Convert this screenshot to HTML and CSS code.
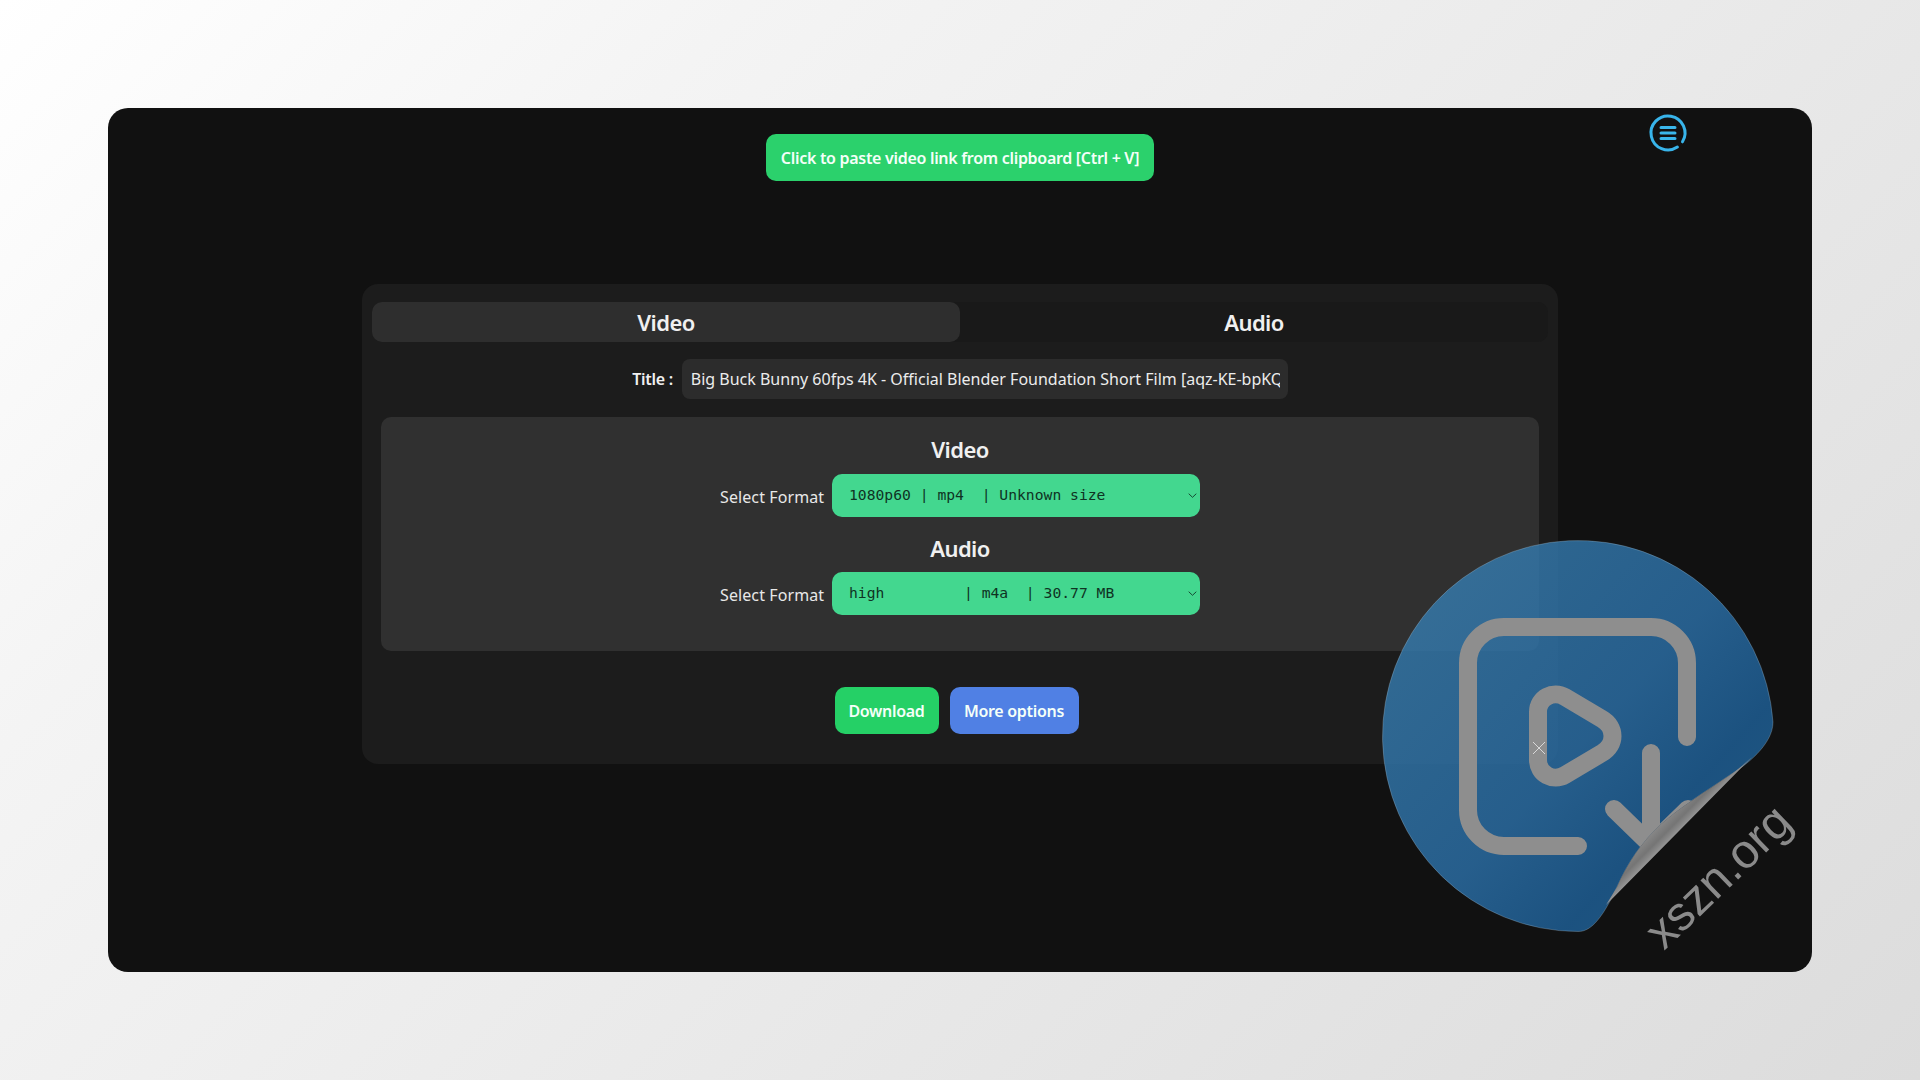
FILE: index.html
```html
<!DOCTYPE html>
<html lang="en">
<head>
<meta charset="utf-8">
<title>Video downloader</title>
<link rel="stylesheet" href="styles.css">
</head>
<body>
<main class="window">
  <button class="btn btn-paste" type="button">Click to paste video link from clipboard [Ctrl + V]</button>
  <svg class="menu-icon" viewBox="0 0 44 44" width="44" height="44" aria-hidden="true">
    <path class="menu-ring" d="M36.5 30.8A17 17 0 1 0 31.4 36.1"/>
    <path class="menu-bars" d="M15 16.5H29M15 22H29M15 27.5H29"/>
  </svg>
  <section class="card">
    <div class="tabs">
      <div class="tab tab-active">Video</div>
      <div class="tab">Audio</div>
    </div>
    <div class="title-row">
      <label class="title-label" for="title">Title :</label>
      <input class="title-input" id="title" type="text" readonly value="Big Buck Bunny 60fps 4K - Official Blender Foundation Short Film [aqz-KE-bpKQ]">
    </div>
    <div class="formats">
      <h2 class="format-heading">Video</h2>
      <div class="format-row">
        <span class="format-label">Select Format</span>
        <select class="format-select"><option>1080p60 | mp4&nbsp; | Unknown size</option></select>
      </div>
      <h2 class="format-heading format-heading-second">Audio</h2>
      <div class="format-row">
        <span class="format-label">Select Format</span>
        <select class="format-select"><option>high&nbsp;&nbsp;&nbsp;&nbsp;&nbsp;&nbsp;&nbsp;&nbsp; | m4a&nbsp; | 30.77 MB</option></select>
      </div>
    </div>
    <div class="actions">
      <button class="btn btn-download" type="button">Download</button>
      <button class="btn btn-more" type="button">More options</button>
    </div>
  </section>
</main>
<svg class="sticker" viewBox="1370 530 450 440" width="450" height="440" aria-hidden="true">
  <defs>
    <linearGradient id="blue" gradientUnits="userSpaceOnUse" x1="1430" y1="590" x2="1750" y2="880">
      <stop offset="0" stop-color="#367bad"/>
      <stop offset="0.5" stop-color="#2b6fa7"/>
      <stop offset="0.76" stop-color="#1e6098"/>
      <stop offset="0.86" stop-color="#206399"/>
      <stop offset="0.95" stop-color="#337cb3"/>
      <stop offset="1" stop-color="#337cb3"/>
    </linearGradient>
    <linearGradient id="curl" gradientUnits="userSpaceOnUse" x1="1645" y1="835" x2="1668" y2="858">
      <stop offset="0" stop-color="#8d8d8d"/>
      <stop offset="0.4" stop-color="#757575"/>
      <stop offset="0.75" stop-color="#a0a0a0"/>
      <stop offset="1" stop-color="#969696"/>
    </linearGradient>
    <clipPath id="peel">
      <path d="M1773 722A195.5 195.5 0 1 0 1578 931.5C1592 932 1604 915 1617 887C1628 862 1642 842 1660 825C1680 807 1705 792 1730 775C1745 766 1773 745 1773 722Z"/>
    </clipPath>
  </defs>
  <path class="sticker-body" d="M1773 722A195.5 195.5 0 1 0 1578 931.5C1592 932 1604 915 1617 887C1628 862 1642 842 1660 825C1680 807 1705 792 1730 775C1745 766 1773 745 1773 722Z"/>
  <g class="sticker-glyph" clip-path="url(#peel)">
    <path d="M1687 737V663A36 36 0 0 0 1651 627H1504A36 36 0 0 0 1468 663V810A36 36 0 0 0 1504 846H1578"/>
    <path d="M1538 712C1538 698 1553 690 1565 697L1602 719C1616 727 1616 745 1602 753L1565 775C1553 782 1538 774 1538 760Z"/>
    <path d="M1651 753V845M1614 809L1651 845L1688 809"/>
  </g>
  <path class="sticker-curl" d="M1606 905L1752 757C1745 763 1738 770 1730 775C1705 792 1680 807 1660 825C1642 842 1628 862 1617 887Z"/>
  <path class="sticker-x" d="M1533 742L1545 754M1545 742L1533 754"/>
  <text class="sticker-text" x="1664" y="951" transform="rotate(-44 1664 951)">xszn.org</text>
</svg>
</body>
</html>
```
FILE: styles.css
```css
* { box-sizing: border-box; }

html, body { height: 100%; }

body {
  margin: 0;
  padding: 108px 108px 108px;
  position: relative;
  overflow: hidden;
  background: linear-gradient(135deg, #ffffff 0%, #f4f4f4 25%, #dcdcdc 100%);
  font-family: "Noto Sans", "Open Sans", sans-serif;
  color: #f0f0f0;
}

.window {
  position: relative;
  height: 864px;
  padding-top: 26px;
  border-radius: 20px;
  background: #111111;
  display: flex;
  flex-direction: column;
  align-items: center;
}

.btn {
  border: 0;
  border-radius: 10px;
  color: #f4fff8;
  font-family: inherit;
  font-size: 16px;
  font-weight: 600;
  letter-spacing: -0.3px;
  height: 47px;
  padding: 0;
}

.btn-paste { background: #2bd16c; width: 388px; flex: none; letter-spacing: -0.3px; }
.btn-download { background: #25d066; width: 104px; }
.btn-more { background: #5080e4; width: 129px; }

.menu-icon { position: absolute; left: 1538px; top: 3px; }
.menu-ring { fill: none; stroke: #38b4ea; stroke-width: 3; stroke-linecap: round; }
.menu-bars { fill: none; stroke: #3ab6ea; stroke-width: 3; stroke-linecap: round; }

.card {
  margin-top: 103px;
  width: 1196px;
  height: 480px;
  padding: 18px 10px 0;
  border-radius: 16px;
  background: #1c1c1c;
  display: flex;
  flex-direction: column;
  align-items: center;
}

.tabs {
  width: 1176px;
  height: 40px;
  flex: none;
  display: grid;
  grid-template-columns: 1fr 1fr;
  border-radius: 10px;
  background: #191919;
}

.tab {
  display: flex;
  align-items: center;
  justify-content: center;
  border-radius: 10px;
  font-size: 22px;
  font-weight: 600;
  letter-spacing: -0.6px;
}

.tab-active { background: #2e2e2e; }

.title-row {
  margin-top: 17px;
  display: flex;
  align-items: center;
  gap: 9px;
}

.title-label { font-size: 16px; font-weight: 600; letter-spacing: -0.3px; }

.title-input {
  width: 606px;
  height: 40px;
  padding: 0 8px 0 9px;
  border: 0;
  border-radius: 8px;
  background: #2c2c2c;
  color: #ececec;
  font-family: inherit;
  font-size: 16px;
  outline: none;
}

.formats {
  margin-top: 18px;
  width: 1158px;
  height: 234px;
  flex: none;
  padding-top: 17px;
  border-radius: 10px;
  background: #303030;
  display: flex;
  flex-direction: column;
  align-items: center;
}

.format-heading {
  margin: 0;
  height: 30px;
  line-height: 30px;
  font-size: 22px;
  font-weight: 600;
  letter-spacing: -0.6px;
}

.format-heading-second { margin-top: 16px; }

.format-row {
  margin-top: 10px;
  display: flex;
  align-items: center;
  gap: 8px;
}

.format-heading-second + .format-row { margin-top: 9px; }

.format-label { width: 104px; font-size: 16px; letter-spacing: 0.1px; margin-top: 3px; color: #e8e8e8; white-space: nowrap; }

.format-select {
  -webkit-appearance: none;
  appearance: none;
  width: 368px;
  height: 43px;
  padding: 0 16px 2px 17px;
  border: 0;
  border-radius: 10px;
  background-color: #43d78f;
  background-image: url("data:image/svg+xml,%3Csvg xmlns='http://www.w3.org/2000/svg' width='9' height='5' viewBox='0 0 9 5'%3E%3Cpath d='M.7.7l3.8 3.6L8.3.7' fill='none' stroke='%23164a33' stroke-width='1'/%3E%3C/svg%3E");
  background-repeat: no-repeat;
  background-position: right 3px center;
  color: #0f3323;
  font-family: "DejaVu Sans Mono", "Liberation Mono", monospace;
  font-size: 14.7px;
  outline: none;
}

.actions {
  margin-top: 36px;
  padding-right: 7px;
  display: flex;
  gap: 11px;
}

.sticker { position: absolute; left: 1370px; top: 530px; }
.sticker-body { fill: url(#blue); fill-opacity: 0.82; stroke: #b9cfe0; stroke-opacity: 0.35; stroke-width: 0.8; }
.sticker-glyph path { fill: none; stroke: #8e8e8e; stroke-width: 18; stroke-linecap: round; stroke-linejoin: round; }
.sticker-curl { fill: url(#curl); }
.sticker-x { fill: none; stroke: #d8d8d8; stroke-width: 1; }
.sticker-text { fill: #8a8a8a; font-family: "Liberation Sans", sans-serif; font-size: 48px; }
```
